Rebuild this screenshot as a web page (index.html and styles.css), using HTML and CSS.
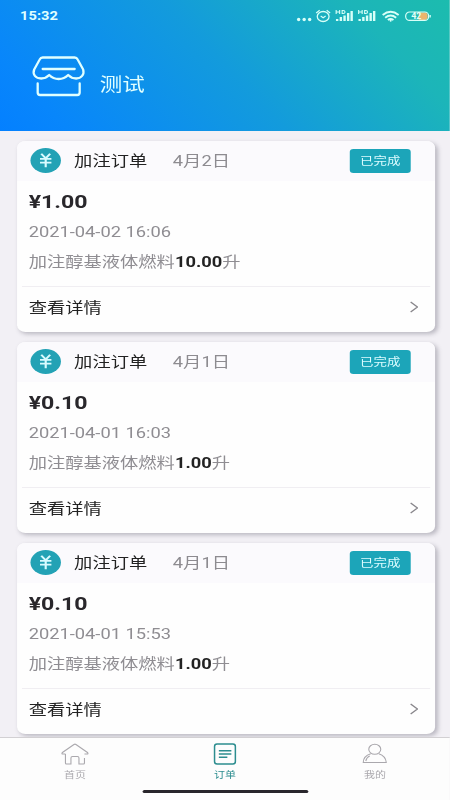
FILE: index.html
```html
<!DOCTYPE html>
<html lang="zh-CN">
<head>
<meta charset="utf-8">
<title>订单</title>
<link rel="stylesheet" href="styles.css">
</head>
<body>
<div class="app">
  <header class="hero">
    <div class="status">
      <span class="clock">15:32</span>
      <svg class="status-icons" viewBox="0 0 136 18" preserveAspectRatio="none" fill="none" stroke="#d8fff8">
        <g fill="#d8fff8" stroke="none"><circle cx="2.500" cy="12.500" r="1.700"/><circle cx="8" cy="12.500" r="1.700"/><circle cx="13.500" cy="12.500" r="1.700"/></g>
        <ellipse cx="27" cy="9.500" rx="5.900" ry="5" stroke-width="1.300"/>
        <path d="M20 6l3.500-2.700M34 6l-3.500-2.700M24.500 9l2.500 1.700L29.500 9" stroke-width="1.200"/>
        <g id="signal">
          <path d="M40 3v4M43.500 3v4M40 5H43.500M46 3.500v3h1c2.500 0 2.500-3 0-3z" stroke-width="1.100"/>
          <path d="M41 14v-2M44.700 14v-4M48.400 14V8.500M52 14V6M55.500 14V4" stroke-width="2.400"/>
        </g>
        <use href="#signal" x="22.500"/>
        <g stroke-width="1.900"><path d="M86.500 8q8-6.500 16 0M89 10.700q5.500-4.500 11 0M91.700 13q2.800-2.200 5.600 0"/></g>
        <circle cx="94.500" cy="13.800" r="1" fill="#d8fff8" stroke="none"/>
        <path d="M122.500 5.500h6q3 0 3 3.700t-3 3.700h-6z" fill="#e9b56d" stroke="none"/>
        <rect x="109.500" y="5" width="23" height="8.400" rx="4" stroke-width="1.200"/>
        <path d="M134 8v2.500" stroke-width="1.300"/>
        <text x="115" y="12.500" class="battery">42</text>
      </svg>
    </div>
    <div class="shop">
      <svg class="shop-icon" viewBox="0 0 54 42" preserveAspectRatio="none" fill="none" stroke="#e0ffff" stroke-width="2.300" stroke-linecap="round" stroke-linejoin="round">
        <path d="M11 2.500h32q2 0 3 2l5.500 10c1.500 5-2 9-7 9-3.500 0-5.500-1-8-3.500q-4 4-9.500 4t-9.500-4c-2.500 2.500-4.500 3.500-8 3.500C4 23.500.500 19.500 2.500 14.500L8 4.500q1-2 3-2z"/>
        <path d="M11 14h32M6 28.500v9q0 2.500 2.500 2.500h37q2.500 0 2.500-2.500v-9"/>
      </svg>
      <span class="shop-name">测试</span>
    </div>
  </header>

  <main class="orders">
    <article class="card">
      <div class="card-head">
        <span class="coin"><svg viewBox="0 0 24 24"><path d="M8.500 5.500l3.500 4.500 3.500-4.500M7.500 10.500h9M7.500 14h9M12 10v8.500"/></svg></span>
        <span class="kind">加注订单</span><span class="day">4月2日</span><span class="badge">已完成</span>
      </div>
      <div class="card-body">
        <div class="amount">¥1.00</div>
        <div class="line">2021-04-02 16:06</div>
        <div class="line">加注醇基液体燃料<b>10.00</b>升</div>
      </div>
      <div class="more">查看详情<svg class="chevron" viewBox="0 0 8 12" preserveAspectRatio="none"><path d="M1 1l6 5-6 5"/></svg></div>
    </article>
    <article class="card">
      <div class="card-head">
        <span class="coin"><svg viewBox="0 0 24 24"><path d="M8.500 5.500l3.500 4.500 3.500-4.500M7.500 10.500h9M7.500 14h9M12 10v8.500"/></svg></span>
        <span class="kind">加注订单</span><span class="day">4月1日</span><span class="badge">已完成</span>
      </div>
      <div class="card-body">
        <div class="amount">¥0.10</div>
        <div class="line">2021-04-01 16:03</div>
        <div class="line">加注醇基液体燃料<b>1.00</b>升</div>
      </div>
      <div class="more">查看详情<svg class="chevron" viewBox="0 0 8 12" preserveAspectRatio="none"><path d="M1 1l6 5-6 5"/></svg></div>
    </article>
    <article class="card">
      <div class="card-head">
        <span class="coin"><svg viewBox="0 0 24 24"><path d="M8.500 5.500l3.500 4.500 3.500-4.500M7.500 10.500h9M7.500 14h9M12 10v8.500"/></svg></span>
        <span class="kind">加注订单</span><span class="day">4月1日</span><span class="badge">已完成</span>
      </div>
      <div class="card-body">
        <div class="amount">¥0.10</div>
        <div class="line">2021-04-01 15:53</div>
        <div class="line">加注醇基液体燃料<b>1.00</b>升</div>
      </div>
      <div class="more">查看详情<svg class="chevron" viewBox="0 0 8 12" preserveAspectRatio="none"><path d="M1 1l6 5-6 5"/></svg></div>
    </article>
  </main>

  <footer class="bottom">
    <nav class="tabs">
      <a class="tab">
        <svg viewBox="0 0 28 24" preserveAspectRatio="none"><path d="M4.500 12H1.500q-1-.5 0-1.500L13 2.500q1-.7 2 0l11.500 8q1 1 0 1.500h-3M4.500 12v9q0 1 1 1H10v-6q0-1.500 1.500-1.500h5q1.500 0 1.500 1.500v6h4.500q1 0 1-1v-5"/></svg>
        <span>首页</span>
      </a>
      <a class="tab active">
        <svg viewBox="0 0 28 24" preserveAspectRatio="none"><rect x="3.700" y="2" width="20.800" height="20" rx="2.500"/><path d="M8 8.700h12.500M8 12h12.500M8 15.300h8.500"/></svg>
        <span>订单</span>
      </a>
      <a class="tab">
        <svg viewBox="0 0 28 24" preserveAspectRatio="none"><ellipse cx="14" cy="7.300" rx="6" ry="5"/><path d="M10 11.700Q2.500 14 2.500 20.500h23Q25 14 18 11.700M5 19q1-4 4-5"/></svg>
        <span>我的</span>
      </a>
    </nav>
    <div class="home-bar"></div>
  </footer>
</div>
</body>
</html>
```

FILE: styles.css
```css
* { box-sizing: border-box; }
body { margin: 0; overflow: hidden; background: #f2f0f5; }

.app {
  width: 369.23px;
  height: 800px;
  display: flex;
  flex-direction: column;
  transform: scaleX(1.21875);
  transform-origin: 0 0;
  font-family: Roboto, "Noto Sans CJK SC", sans-serif;
  font-size: 15px;
  color: #222;
}

.hero {
  flex: none;
  height: 131px;
  background: linear-gradient(52deg, #0480ff 0%, #0886fb 12%, #139bdc 50%, #1cb5b9 82%, #1cbcae 100%);
  color: #e0ffff;
}
.status {
  display: flex;
  justify-content: space-between;
  align-items: center;
  height: 31px;
  padding: 0 14.5px 0 16.5px;
}
.clock { font: bold 12px/16px Roboto, sans-serif; letter-spacing: 0; }
.status-icons { width: 111.6px; height: 18px; }
.battery { font: bold 9px Roboto, sans-serif; fill: #e4fff8; stroke: none; }

.shop { display: flex; align-items: flex-start; padding: 24px 0 0 26px; }
.shop-icon { width: 44.3px; height: 42px; }
.shop-name { margin: 16px 0 0 11.5px; font-size: 18.5px; line-height: 28px; }

.orders { flex: 1; display: flex; flex-direction: column; gap: 10px; padding: 9.5px 12.5px 0 14px; min-height: 0; }
.card {
  flex: none;
  height: 191px;
  display: flex;
  flex-direction: column;
  border-radius: 7px;
  background: #fefefe;
  box-shadow: 2px 2px 4px rgba(80, 75, 95, .34);
  overflow: hidden;
}
.card-head { display: flex; align-items: center; height: 40px; padding: 0 20px 0 11.3px; background: #fbfafd; }
.coin { width: 25px; height: 25px; border-radius: 50%; background: #23a2b5; }
.coin svg { display: block; width: 25px; height: 25px; fill: none; stroke: #d9fbff; stroke-width: 1.7; }
.kind { margin-left: 10.5px; line-height: 22px; }
.day { margin-left: 21px; line-height: 22px; color: #8d8b90; }
.badge {
  margin-left: auto;
  width: 49.5px;
  height: 24px;
  border-radius: 3px;
  background: #1ca5b9;
  color: #dcfcff;
  font-size: 11px;
  line-height: 25px;
  text-align: center;
}
.card-body { height: 105.5px; padding: 6px 9.5px 0; }
.amount { font-size: 19px; line-height: 30px; font-weight: 700; color: #29272b; }
.line { line-height: 30px; color: #8f8d92; white-space: nowrap; }
.line b { color: #222; }
.more {
  flex: 1;
  display: flex;
  align-items: center;
  justify-content: space-between;
  margin: 0 4px;
  padding: 0 9.3px 5px 5.5px;
  border-top: 1px solid #f0eef2;
}
.chevron { width: 7.5px; height: 12px; fill: none; stroke: #89878c; stroke-width: 1.2; }

.bottom { position: relative; flex: none; height: 63px; background: #fdfdfd; border-top: 1px solid #d2d0d3; }
.tabs { display: flex; padding-top: 4px; }
.tab { flex: 1; display: flex; flex-direction: column; align-items: center; color: #aaa8ad; font-size: 9px; line-height: 14px; }
.tab svg { width: 23px; height: 24px; fill: none; stroke: currentColor; stroke-width: 1.1; }
.tab span { margin-top: 2px; }
.tab.active { color: #2c8d8f; }
.tab.active svg { stroke-width: 1.5; }
.home-bar { width: 136px; height: 3px; margin: 8px auto 0; border-radius: 2px; background: #29262c; }
```
